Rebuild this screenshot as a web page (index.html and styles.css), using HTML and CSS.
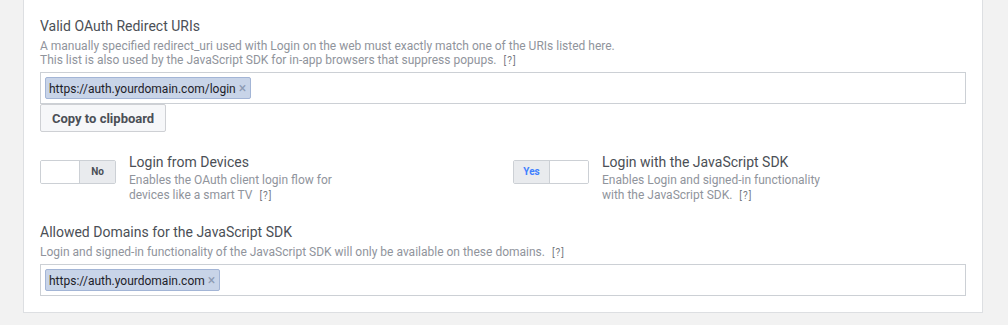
FILE: index.html
```html
<!DOCTYPE html>
<html>
<head>
    <meta charset="utf-8">
    <title>Client OAuth Settings</title>
    <link rel="stylesheet" href="styles.css">
</head>
<body>
    <div class="page">
        <div class="panel">
            <div class="field">
                <div class="field-title">Valid OAuth Redirect URIs</div>
                <div class="field-desc">
                    A manually specified redirect_uri used with Login on the web must exactly match one of the URIs listed here.<br>
                    This list is also used by the JavaScript SDK for in-app browsers that suppress popups. <span class="help">[?]</span>
                </div>
                <div class="token-input">
                    <span class="token">https://auth.yourdomain.com/login <span class="token-x">×</span></span>
                </div>
                <button class="btn">Copy to clipboard</button>
            </div>

            <div class="toggles">
                <div class="toggle-row">
                    <div class="switch">
                        <span class="switch-blank"></span>
                        <span class="switch-label">No</span>
                    </div>
                    <div class="toggle-text">
                        <div class="field-title">Login from Devices</div>
                        <div class="field-desc">Enables the OAuth client login flow for<br>devices like a smart TV <span class="help">[?]</span></div>
                    </div>
                </div>
                <div class="toggle-row">
                    <div class="switch on">
                        <span class="switch-label">Yes</span>
                        <span class="switch-blank"></span>
                    </div>
                    <div class="toggle-text">
                        <div class="field-title">Login with the JavaScript SDK</div>
                        <div class="field-desc">Enables Login and signed-in functionality<br>with the JavaScript SDK. <span class="help">[?]</span></div>
                    </div>
                </div>
            </div>

            <div class="field last">
                <div class="field-title">Allowed Domains for the JavaScript SDK</div>
                <div class="field-desc">
                    Login and signed-in functionality of the JavaScript SDK will only be available on these domains. <span class="help">[?]</span>
                </div>
                <div class="token-input">
                    <span class="token">https://auth.yourdomain.com <span class="token-x">×</span></span>
                </div>
            </div>
        </div>
    </div>
</body>
</html>
```

FILE: styles.css
```css
body {
    margin: 0;
    background: #f2f2f2;
    font-family: Roboto, "Liberation Sans", Arial, sans-serif;
    color: #4b4f56;
}

.page {
    padding: 0 25px 0 23px;
}

.panel {
    width: 926px;
    background: #fff;
    border: 1px solid #dddfe2;
    border-top: none;
    padding: 17px 16px 16px 16px;
}

.field-title {
    font-size: 14px;
    line-height: 18px;
    color: #4b4f56;
}

.field-desc {
    font-size: 12px;
    line-height: 14px;
    color: #90949c;
    margin-top: 4px;
}

.help {
    font-size: 10px;
    color: #767a81;
    margin-left: 4px;
    letter-spacing: 1px;
}

.token-input {
    margin-top: 4px;
    height: 32px;
    border: 1px solid #ccd0d5;
    padding: 4px;
    box-sizing: border-box;
    display: flex;
    align-items: flex-start;
}

.token {
    display: inline-block;
    height: 22px;
    line-height: 20px;
    box-sizing: border-box;
    padding: 0 4px 0 3px;
    background: #c8d4e8;
    border: 1px solid #a3b5d6;
    border-radius: 2px;
    font-size: 12px;
    color: #1d2129;
}

.token-x {
    color: #8d9bb3;
    font-size: 14px;
}

.btn {
    display: block;
    height: 28px;
    padding: 0 11px;
    background: #f6f7f9;
    border: 1px solid #ced0d4;
    border-radius: 2px;
    font-family: inherit;
    font-size: 13px;
    font-weight: bold;
    color: #4b4f56;
}

.toggles {
    display: grid;
    grid-template-columns: 473px 1fr;
    margin-top: 21px;
}

.toggle-row {
    display: flex;
    align-items: flex-start;
}

.switch {
    display: flex;
    width: 76px;
    height: 24px;
    box-sizing: border-box;
    border: 1px solid #ccd0d5;
    border-radius: 2px;
    margin-top: 7px;
    margin-right: 13px;
    flex-shrink: 0;
    overflow: hidden;
}

.switch-blank {
    width: 38px;
    background: #fff;
}

.switch-label {
    flex: 1;
    background: #e9ebee;
    border-left: 1px solid #ccd0d5;
    font-size: 10px;
    font-weight: bold;
    line-height: 22px;
    text-align: center;
    color: #4b4f56;
}

.switch.on .switch-label {
    border-left: none;
    border-right: 1px solid #ccd0d5;
    color: #4080ff;
}

.toggle-text .field-desc {
    margin-top: 2px;
    line-height: 15px;
}

.field.last {
    margin-top: 20px;
}
```
